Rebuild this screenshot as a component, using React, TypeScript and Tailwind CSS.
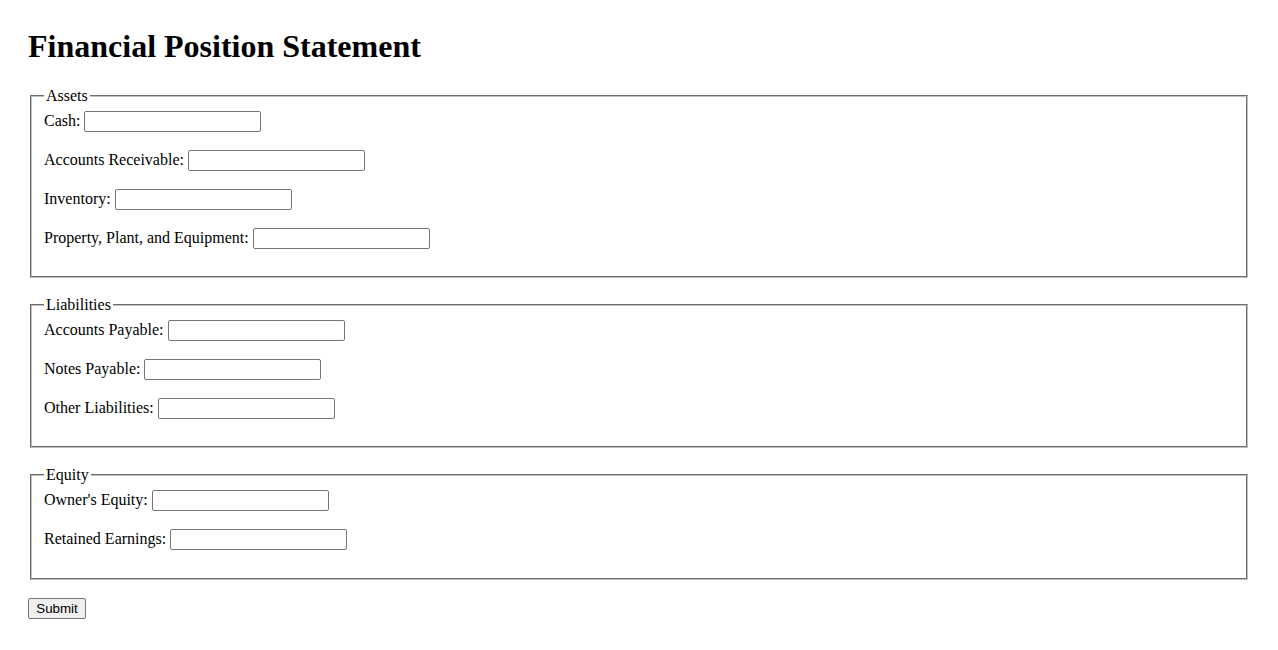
const sections: { title: string; fields: string[] }[] = [
  {
    title: "Assets",
    fields: ["Cash", "Accounts Receivable", "Inventory", "Property, Plant, and Equipment"],
  },
  {
    title: "Liabilities",
    fields: ["Accounts Payable", "Notes Payable", "Other Liabilities"],
  },
  {
    title: "Equity",
    fields: ["Owner's Equity", "Retained Earnings"],
  },
];

function Field({ label }: { label: string }) {
  return (
    <div className="flex items-baseline mb-[18px]">
      <label className="whitespace-pre">{label}: </label>
      <input
        type="text"
        className="w-[177px] h-[21px] border border-[#767676] rounded-[2px] px-[2px] bg-white font-['Liberation_Sans',Arial,sans-serif] text-[13.333px] outline-none"
      />
    </div>
  );
}

export default function App() {
  return (
    <div className="min-h-screen bg-white text-black px-[28px] pt-[28px] pb-[28px] font-['Liberation_Serif','Times_New_Roman',serif] text-[16px] leading-[normal]">
      <h1 className="text-[32px] font-bold mb-[22px]">Financial Position Statement</h1>
      <form onSubmit={(e) => e.preventDefault()}>
        {sections.map((s) => (
          <fieldset
            key={s.title}
            className="mx-[2px] mb-[18px] px-[12px] pt-[5.6px] pb-[9.6px] border-2 [border-style:groove] border-[#c0c0c0]"
          >
            <legend className="px-[2px]">{s.title}</legend>
            {s.fields.map((f) => (
              <Field key={f} label={f} />
            ))}
          </fieldset>
        ))}
        <button
          type="submit"
          className="block w-[58px] h-[21px] px-[6px] py-[1px] border border-[#767676] rounded-[2px] bg-[#efefef] font-['Liberation_Sans',Arial,sans-serif] text-[13.333px] text-black leading-[normal] text-center"
        >
          Submit
        </button>
      </form>
    </div>
  );
}
